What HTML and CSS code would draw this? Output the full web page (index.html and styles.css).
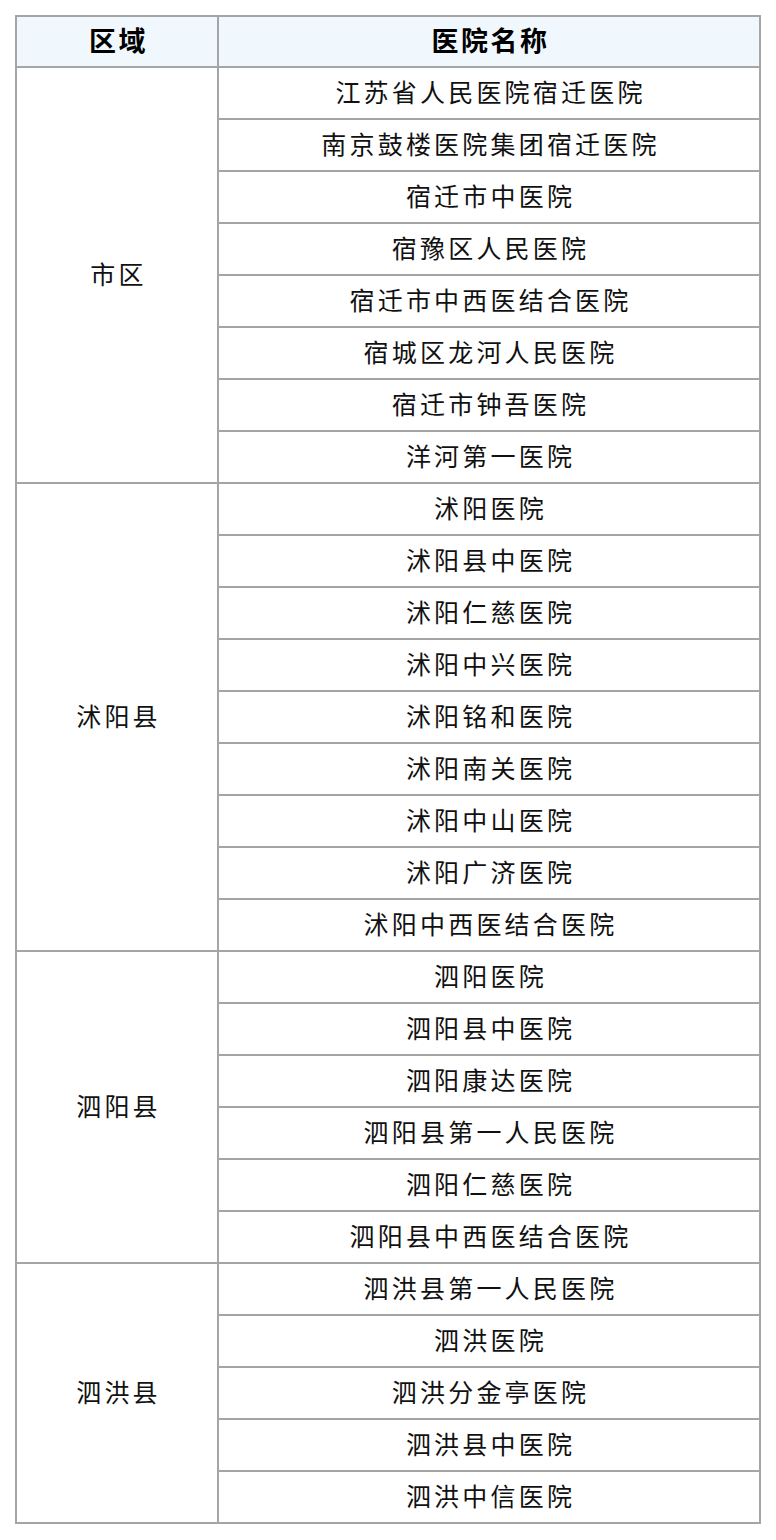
FILE: index.html
```html
<!DOCTYPE html>
<html lang="zh-CN">
<head>
<meta charset="utf-8">
<title>医院名称</title>
<link rel="stylesheet" href="styles.css">
</head>
<body>
<table class="hosp">
<thead>
<tr><th class="c-area">区域</th><th class="c-name">医院名称</th></tr>
</thead>
<tbody>
<tr><td class="area" rowspan="8">市区</td><td>江苏省人民医院宿迁医院</td></tr>
<tr><td>南京鼓楼医院集团宿迁医院</td></tr>
<tr><td>宿迁市中医院</td></tr>
<tr><td>宿豫区人民医院</td></tr>
<tr><td>宿迁市中西医结合医院</td></tr>
<tr><td>宿城区龙河人民医院</td></tr>
<tr><td>宿迁市钟吾医院</td></tr>
<tr><td>洋河第一医院</td></tr>
<tr><td class="area" rowspan="9">沭阳县</td><td>沭阳医院</td></tr>
<tr><td>沭阳县中医院</td></tr>
<tr><td>沭阳仁慈医院</td></tr>
<tr><td>沭阳中兴医院</td></tr>
<tr><td>沭阳铭和医院</td></tr>
<tr><td>沭阳南关医院</td></tr>
<tr><td>沭阳中山医院</td></tr>
<tr><td>沭阳广济医院</td></tr>
<tr><td>沭阳中西医结合医院</td></tr>
<tr><td class="area" rowspan="6">泗阳县</td><td>泗阳医院</td></tr>
<tr><td>泗阳县中医院</td></tr>
<tr><td>泗阳康达医院</td></tr>
<tr><td>泗阳县第一人民医院</td></tr>
<tr><td>泗阳仁慈医院</td></tr>
<tr><td>泗阳县中西医结合医院</td></tr>
<tr><td class="area" rowspan="5">泗洪县</td><td>泗洪县第一人民医院</td></tr>
<tr><td>泗洪医院</td></tr>
<tr><td>泗洪分金亭医院</td></tr>
<tr><td>泗洪县中医院</td></tr>
<tr><td>泗洪中信医院</td></tr>
</tbody>
</table>
</body>
</html>
```
FILE: styles.css
```css
html, body {
  margin: 0;
  padding: 0;
  background: #ffffff;
}
body {
  font-family: "Noto Sans CJK SC", "Noto Sans", sans-serif;
  color: #111111;
}
.hosp {
  margin: 15px;
  width: 746px;
  border: 1px solid #a5a5a5;
  border-spacing: 0;
  table-layout: fixed;
}
.hosp th,
.hosp td {
  border: 1px solid #a5a5a5;
  padding: 0 0 4px 0;
  text-align: center;
  vertical-align: middle;
  box-sizing: border-box;
  font-size: 25px;
  letter-spacing: 3.2px;
  text-indent: 3px;
  line-height: 30px;
}
.hosp th {
  height: 51px;
  background: #f0f8fe;
  font-weight: 700;
  color: #000000;
  font-size: 27px;
  letter-spacing: 2.5px;
}
.hosp td {
  height: 52px;
}
.c-area {
  width: 202px;
}
.hosp td.area {
  height: auto;
}
```
